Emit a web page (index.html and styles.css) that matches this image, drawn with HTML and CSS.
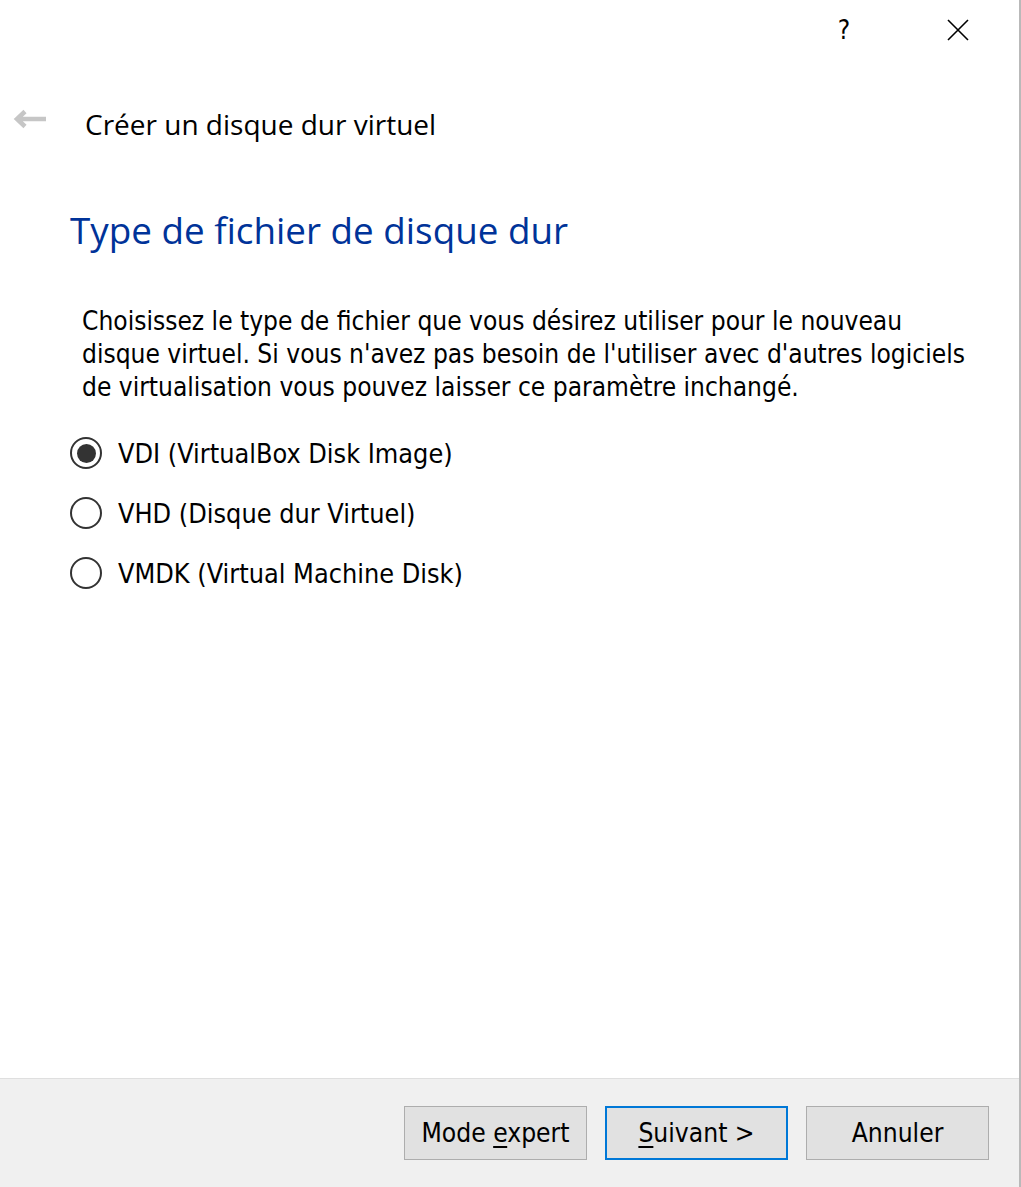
FILE: index.html
```html
<!DOCTYPE html>
<html lang="fr">
<head>
<meta charset="utf-8">
<title>Créer un disque dur virtuel</title>
<link rel="stylesheet" href="styles.css">
</head>
<body>
<div class="window">
  <div class="titlebar">
    <span class="tb-btn help">?</span>
    <span class="tb-btn close">
      <svg width="22" height="22" viewBox="0 0 22 22"><path d="M1 1L21 21M21 1L1 21" stroke="#000" stroke-width="1.6" fill="none"/></svg>
    </span>
  </div>
  <div class="header">
    <svg class="back" width="34" height="20" viewBox="0 0 34 20"><path d="M33 10H5M12 2.5L4 10L12 17.5" stroke="#c6c6c6" stroke-width="4.5" fill="none" stroke-linejoin="miter"/></svg>
    <span class="wiz-title">Créer un disque dur virtuel</span>
  </div>
  <div class="content">
    <h1 class="page-title">Type de fichier de disque dur</h1>
    <p class="desc">Choisissez le type de fichier que vous désirez utiliser pour le nouveau disque virtuel. Si vous n'avez pas besoin de l'utiliser avec d'autres logiciels de virtualisation vous pouvez laisser ce paramètre inchangé.</p>
    <div class="options">
      <div class="option"><span class="radio checked"></span><span class="label">VDI (VirtualBox Disk Image)</span></div>
      <div class="option"><span class="radio"></span><span class="label">VHD (Disque dur Virtuel)</span></div>
      <div class="option"><span class="radio"></span><span class="label">VMDK (Virtual Machine Disk)</span></div>
    </div>
  </div>
  <div class="footer">
    <button class="btn">Mode <u>e</u>xpert</button>
    <button class="btn default"><u>S</u>uivant &gt;</button>
    <button class="btn">Annuler</button>
  </div>
</div>
</body>
</html>
```
FILE: styles.css
```css
html, body {
  margin: 0;
  padding: 0;
  background: #ffffff;
}
body {
  width: 1021px;
  height: 1187px;
  overflow: hidden;
}
.window {
  width: 1019px;
  height: 1187px;
  border-right: 2px solid #b9b9b9;
  background: #ffffff;
  display: flex;
  flex-direction: column;
}
.titlebar {
  height: 60px;
  flex: none;
  display: flex;
  justify-content: flex-end;
  align-items: center;
  padding-right: 41px;
  gap: 74px;
}
.tb-btn {
  width: 40px;
  display: flex;
  justify-content: center;
  align-items: center;
  font-family: "DejaVu Sans Condensed", "DejaVu Sans", sans-serif;
  font-size: 26px;
  color: #000;
}
.header {
  height: 70px;
  flex: none;
  display: flex;
  align-items: center;
  padding-left: 13px;
  margin-top: 29px;
}
.back {
  margin-right: 38px;
  margin-top: -10px;
}
.wiz-title {
  font-family: "Open Sans", "Noto Sans", sans-serif;
  font-size: 28px;
  color: #000;
}
.content {
  flex: 1;
  padding-left: 70px;
  padding-right: 30px;
}
.page-title {
  margin: 46px 0 0 0;
  font-family: "Open Sans", "Noto Sans", sans-serif;
  font-weight: normal;
  font-size: 36.8px;
  line-height: 50px;
  color: #003399;
}
.desc {
  margin: 50px 0 0 12px;
  font-family: "DejaVu Sans Condensed", "DejaVu Sans", sans-serif;
  font-size: 26.1px;
  line-height: 33px;
  color: #000;
  max-width: 900px;
}
.options {
  margin-top: 32px;
  display: flex;
  flex-direction: column;
  gap: 26px;
}
.option {
  display: flex;
  align-items: center;
  height: 34px;
}
.radio {
  width: 28px;
  height: 28px;
  border: 2px solid #333333;
  border-radius: 50%;
  display: flex;
  justify-content: center;
  align-items: center;
  margin-right: 16px;
  background: #fff;
}
.radio.checked::after {
  content: "";
  width: 19px;
  height: 19px;
  border-radius: 50%;
  background: #333333;
}
.label {
  font-family: "DejaVu Sans Condensed", "DejaVu Sans", sans-serif;
  font-size: 26.8px;
  color: #000;
}
.footer {
  height: 109px;
  flex: none;
  border-top: 1px solid #dfdfdf;
  background: #f0f0f0;
  display: flex;
  justify-content: flex-end;
  align-items: flex-start;
  padding-top: 27px;
  padding-right: 30px;
  gap: 18px;
  box-sizing: border-box;
}
.btn {
  width: 183px;
  height: 54px;
  border: 1px solid #adadad;
  background: #e1e1e1;
  font-family: "DejaVu Sans Condensed", "DejaVu Sans", sans-serif;
  font-size: 26.2px;
  color: #000;
  padding: 0;
  margin: 0;
}
.btn.default {
  border: 2px solid #0078d7;
}
.btn u {
  text-underline-offset: 4px;
}
```
